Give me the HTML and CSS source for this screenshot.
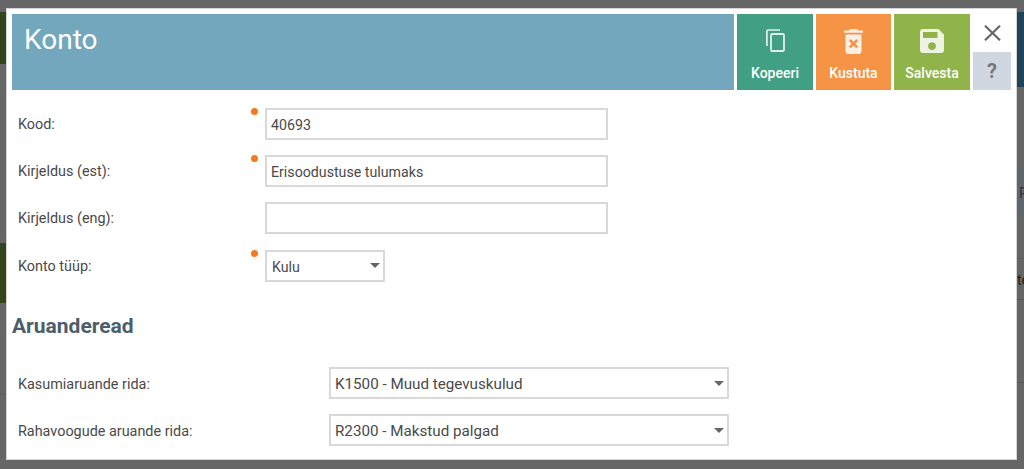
FILE: index.html
```html
<!DOCTYPE html>
<html lang="et">
<head>
<meta charset="utf-8">
<title>Konto</title>
<link rel="stylesheet" href="styles.css">
</head>
<body>
<div class="backdrop">
  <div class="bg-block bg-left-top"></div>
  <div class="bg-block bg-left-mid"></div>
  <div class="bg-line bg-line-l"></div>
  <div class="bg-block bg-right-top"></div>
  <div class="bg-block bg-right-mid"><span>R</span></div>
  <div class="bg-line bg-line-a"></div>
  <div class="bg-text">te</div>
  <div class="bg-line bg-line-b"></div>
  <div class="bg-line bg-line-c"></div>
</div>
<main class="modal">
  <header class="head">
    <div class="title-bar"><h1>Konto</h1></div>
    <button class="action copy" type="button">
      <svg viewBox="0 0 19 23" width="19" height="23"><path fill="none" stroke="currentColor" stroke-width="1.7" d="M14 1H2.500A1.600 1.600 0 0 0 .9 2.600V17"/><rect x="5" y="5" width="13" height="17" rx="1.300" fill="none" stroke="currentColor" stroke-width="1.800"/></svg>
      <span>Kopeeri</span>
    </button>
    <button class="action del" type="button">
      <svg viewBox="0 0 19 25" width="19" height="25"><path fill="currentColor" d="M6 0h7l1 1.500h5v2.200H0V1.500h5zM1.500 5.500h16v17a2.400 2.400 0 0 1-2.400 2.400H3.900a2.400 2.400 0 0 1-2.400-2.400z"/><path fill="none" stroke="#f59445" stroke-width="2.600" d="M5.800 11l7.400 7.400M13.200 11l-7.400 7.400"/></svg>
      <span>Kustuta</span>
    </button>
    <button class="action save" type="button">
      <svg viewBox="0 0 24 24" width="24" height="24"><path fill="currentColor" fill-rule="evenodd" d="M3 0h15.500L24 5.500V21a3 3 0 0 1-3 3H3a3 3 0 0 1-3-3V3a3 3 0 0 1 3-3zM3 3v6h14.500V3zM12 13.200a3.900 3.900 0 1 0 0 7.800 3.900 3.900 0 0 0 0-7.800z"/></svg>
      <span>Salvesta</span>
    </button>
    <div class="side">
      <button class="close" type="button" aria-label="Sulge">
        <svg viewBox="0 0 17 16" width="17" height="16"><path stroke="#666" stroke-width="2.100" d="M1 .7l15 14.600M16 .7L1 15.300"/></svg>
      </button>
      <button class="help" type="button">?</button>
    </div>
  </header>

  <section class="fields">
    <div class="row">
      <label>Kood:</label>
      <span class="req on"></span>
      <div class="input wide">40693</div>
    </div>
    <div class="row">
      <label>Kirjeldus (est):</label>
      <span class="req on"></span>
      <div class="input wide">Erisoodustuse tulumaks</div>
    </div>
    <div class="row">
      <label>Kirjeldus (eng):</label>
      <span class="req"></span>
      <div class="input wide"></div>
    </div>
    <div class="row type-row">
      <label>Konto tüüp:</label>
      <span class="req on"></span>
      <div class="input select short">Kulu<i class="caret"></i></div>
    </div>
  </section>

  <h2>Aruanderead</h2>

  <section class="reports">
    <div class="row report">
      <label>Kasumiaruande rida:</label>
      <div class="input select long">K1500 - Muud tegevuskulud<i class="caret"></i></div>
    </div>
    <div class="row report">
      <label>Rahavoogude aruande rida:</label>
      <div class="input select long">R2300 - Makstud palgad<i class="caret"></i></div>
    </div>
  </section>
</main>
</body>
</html>
```
FILE: styles.css
```css
* { box-sizing: border-box; }
html, body { margin: 0; height: 100%; overflow: hidden; }
body {
  background: #666666;
  font-family: Roboto, "Liberation Sans", sans-serif;
  color: #4a4a4a;
  padding: 8px 7px 9px 6px;
}
.backdrop { position: absolute; inset: 0; }
.bg-block { position: absolute; }
.bg-left-top { left: 0; top: 12px; width: 6px; height: 52px; background: #33451c; }
.bg-left-mid { left: 0; top: 243px; width: 6px; height: 60px; background: #33451c; }
.bg-right-top { left: 1017px; top: 12px; width: 7px; height: 75px; background: #1f4359; }
.bg-right-mid { left: 1017px; top: 170px; width: 7px; height: 47px; background: #5d676c; overflow: hidden; color: #333; font-size: 14px; line-height: 47px; padding-left: 2px; }
.bg-line { position: absolute; left: 1017px; width: 7px; height: 1px; background: #5a5a5a; }
.bg-line-a { top: 258px; }
.bg-line-b { top: 299px; }
.bg-line-c { top: 382px; }
.bg-line-l { left: 0; width: 6px; top: 394px; }
.bg-text { position: absolute; left: 1017px; top: 271px; width: 7px; overflow: hidden; font-size: 14px; line-height: 18px; color: #222; }

.modal {
  position: relative;
  height: 100%;
  background: #fff;
  border: 1px solid #d4d4d4;
  overflow: hidden;
  padding: 5px 5px 0 5px;
}
.head { display: flex; height: 76px; gap: 3px; }
.title-bar { flex: 1; background: #72a7bd; color: #fff; padding: 11px 12px; }
h1 { margin: 0; font-size: 28px; font-weight: 400; line-height: 29px; }
.action {
  width: 76px;
  border: 0;
  padding: 15px 0 9px;
  color: #fff;
  font: 500 14px/16px Roboto, "Liberation Sans", sans-serif;
  display: flex;
  flex-direction: column;
  align-items: center;
  justify-content: space-between;
}
.action svg { opacity: .85; }
.copy { background: #41a084; }
.del { background: #f59445; width: 75px; }
.save { background: #90b449; }
.side { width: 38px; display: flex; flex-direction: column; }
.close { height: 38px; border: 0; background: none; padding: 0; display: flex; align-items: center; justify-content: center; }
.help { height: 38px; border: 0; background: #cfd8e0; color: #777; font: 700 20px Roboto, sans-serif; padding: 0; }

.fields { padding-top: 18px; display: flex; flex-direction: column; gap: 15px; }
.row { display: flex; align-items: center; height: 32px; }
.type-row { margin-top: 1px; }
label { font-size: 14.4px; width: 233px; padding-left: 6px; flex: none; color: #4a4a4a; }
.req { width: 20px; height: 32px; flex: none; position: relative; }
.req.on::before {
  content: "";
  position: absolute;
  left: 6px;
  top: 0;
  width: 7px;
  height: 7px;
  border-radius: 50%;
  background: #f5791f;
}
.input {
  height: 32px;
  border: 2px solid #d8d8d8;
  font-size: 14.2px;
  line-height: 30px;
  padding: 0 4px;
  color: #4a4a4a;
  position: relative;
  flex: none;
}
.wide { width: 343px; }
.short { width: 120px; padding-left: 5px; }
.long { width: 400px; font-size: 15.2px; line-height: 31px; }
.caret {
  position: absolute;
  right: 3px;
  top: 11px;
  border-left: 5px solid transparent;
  border-right: 5px solid transparent;
  border-top: 5px solid #666;
}
.long .caret { top: 12px; }
h2 { margin: 0; padding-top: 31px; font-size: 21px; font-weight: 700; line-height: 26px; color: #4c5e6b; }
.reports { padding-top: 28px; display: flex; flex-direction: column; gap: 15px; }
.report label { width: 317px; padding-top: 2px; }
```
